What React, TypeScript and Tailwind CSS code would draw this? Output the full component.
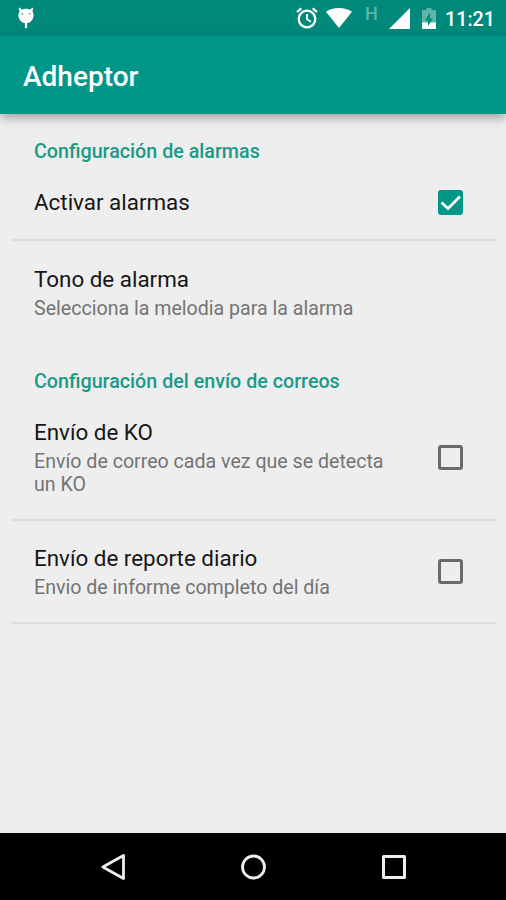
import type { ReactNode } from 'react'
import clsx from 'clsx'

type Preference = {
  id: string
  title: string
  summary?: string
  checked?: boolean
  height: string
  divider?: boolean
}

const alarmPreferences: Preference[] = [
  { id: 'alarms', title: 'Activar alarmas', checked: true, height: 'h-[76px]', divider: true },
  { id: 'tone', title: 'Tono de alarma', summary: 'Selecciona la melodia para la alarma', height: 'h-[103px]' },
]

const mailPreferences: Preference[] = [
  { id: 'ko', title: 'Envío de KO', summary: 'Envío de correo cada vez que se detecta un KO', checked: false, height: 'h-[126px]', divider: true },
  { id: 'daily', title: 'Envío de reporte diario', summary: 'Envio de informe completo del día', checked: false, height: 'h-[103px]', divider: true },
]

function StatusBar() {
  return (
    <div className="flex h-9 items-center bg-[#00897b] text-white">
      <svg className="ml-[17px] h-6 w-[18px]" viewBox="0 0 18 24" fill="currentColor">
        <path d="M1.6 2.2 3 1.6l1.6 2.2A8 8 0 0 1 9 2.7a8 8 0 0 1 4.4 1.1L15 1.6l1.4.6-1 3.1c.8 1.1 1.2 2.5 1.2 4 0 4-2.7 7.2-6 7.8h-.5v4.2a1.1 1.1 0 0 1-2.2 0v-4.2h-.5c-3.3-.6-6-3.8-6-7.8 0-1.5.4-2.9 1.2-4z" />
        <circle cx="5.4" cy="8" r="1" fill="#68b9b0" />
        <circle cx="12.6" cy="8" r="1" fill="#68b9b0" />
      </svg>
      <div className="ml-auto flex h-full items-center">
        <svg className="h-[22px] w-[22px]" viewBox="0 0 22 22" fill="none" stroke="currentColor" strokeWidth="2.3">
          <circle cx="11" cy="12" r="8.3" />
          <path d="M11 7v5.3l4 2.5" strokeWidth="1.9" />
          <path d="m1 5 4.3-3.7M21 5l-4.300-3.700" />
        </svg>
        <svg className="-mt-px ml-[8px] h-[20px] w-[26px]" viewBox="0 0 26 20" fill="currentColor">
          <path d="M0 3.7C3.6 1.2 8 0 13 0s9.400 1.200 13 3.700L13 20z" />
        </svg>
        <span className="mb-[8px] ml-[13px] w-[13px] text-[18px] leading-4 font-medium text-[#5db5ab]">H</span>
        <svg className="ml-[11px] h-[21px] w-[21px]" viewBox="0 0 21 21" fill="currentColor">
          <path d="M21 0v21H0z" />
        </svg>
        <svg className="ml-[12px] h-[21px] w-[14px]" viewBox="0 0 14 21">
          <path d="M4.5 0h5v2H13a1 1 0 0 1 1 1v17a1 1 0 0 1-1 1H1a1 1 0 0 1-1-1V3a1 1 0 0 1 1-1h3.5z" fill="#61b6ac" />
          <path d="M0 14.5h14V20a1 1 0 0 1-1 1H1a1 1 0 0 1-1-1z" fill="white" />
          <path d="M8 4.5v6h3L6 18v-5.5H3z" fill="#00897b" />
        </svg>
        <span className="mt-[3px] mr-[12px] ml-[9px] w-[49px] text-[19.7px] leading-6 font-medium whitespace-nowrap">11:21</span>
      </div>
    </div>
  )
}

function Checkbox({ checked }: { checked: boolean }) {
  return (
    <span
      role="checkbox"
      aria-checked={checked}
      className={clsx(
        'mr-[43px] flex h-[25px] w-[25px] shrink-0 items-center justify-center rounded-[3px]',
        checked ? 'bg-[#009688]' : 'border-3 border-[#6a6a6a]',
      )}
    >
      {checked && (
        <svg className="h-[25px] w-[25px]" viewBox="0 0 25 25" fill="none" stroke="white" strokeWidth="2.8">
          <path d="m3.5 12.5 6.5 6L22 6.5" />
        </svg>
      )}
    </span>
  )
}

function PreferenceRow({ item }: { item: Preference }) {
  return (
    <div className={clsx('mr-[10px] ml-3 flex items-center', item.height, item.divider && 'border-b-2 border-[#dcdcdc]')}>
      <div className="ml-[22px] w-[370px]">
        <div className="text-[22.4px] leading-7 text-[#161616]">{item.title}</div>
        {item.summary && (
          <div className="mt-1 text-[19.6px] leading-[23px] text-[#747474]">{item.summary}</div>
        )}
      </div>
      {item.checked !== undefined && (
        <div className="-mr-[10px] ml-auto">
          <Checkbox checked={item.checked} />
        </div>
      )}
    </div>
  )
}

function Category({ title, children }: { title: string; children: ReactNode }) {
  return (
    <section className="pt-[26px]">
      <h2 className="ml-[34px] h-[25px] text-[19.7px] leading-6 font-medium text-[#1a9a89]">{title}</h2>
      {children}
    </section>
  )
}

function NavigationBar() {
  return (
    <nav className="flex h-[67px] items-center bg-black text-[#eee]">
      <svg className="ml-[100px] h-7 w-7" viewBox="0 0 28 28" fill="none" stroke="currentColor" strokeWidth="2.8" strokeLinejoin="round">
        <path d="M23.5 2.5v23L2.8 14z" />
      </svg>
      <svg className="ml-[111px] h-7 w-7" viewBox="0 0 28 28" fill="none" stroke="currentColor" strokeWidth="2.8">
        <circle cx="14.5" cy="14" r="11" />
      </svg>
      <svg className="ml-[113px] h-7 w-7" viewBox="0 0 28 28" fill="none" stroke="currentColor" strokeWidth="3" strokeLinejoin="round">
        <path d="M3.5 3.5h21v21h-21z" />
      </svg>
    </nav>
  )
}

export default function App() {
  return (
    <div className="flex h-[900px] w-[506px] flex-col overflow-hidden bg-[#eee] font-[Roboto,sans-serif]">
      <StatusBar />
      <header className="flex h-[78px] shrink-0 items-center bg-[#009688] pl-[23px] shadow-[0_4px_10px_rgba(0,0,0,0.32)]">
        <h1 className="mt-[3px] text-[28px] leading-8 font-medium text-white">Adheptor</h1>
      </header>
      <main className="flex-1">
        <Category title="Configuración de alarmas">
          {alarmPreferences.map((item) => (
            <PreferenceRow key={item.id} item={item} />
          ))}
        </Category>
        <Category title="Configuración del envío de correos">
          {mailPreferences.map((item) => (
            <PreferenceRow key={item.id} item={item} />
          ))}
        </Category>
      </main>
      <NavigationBar />
    </div>
  )
}
